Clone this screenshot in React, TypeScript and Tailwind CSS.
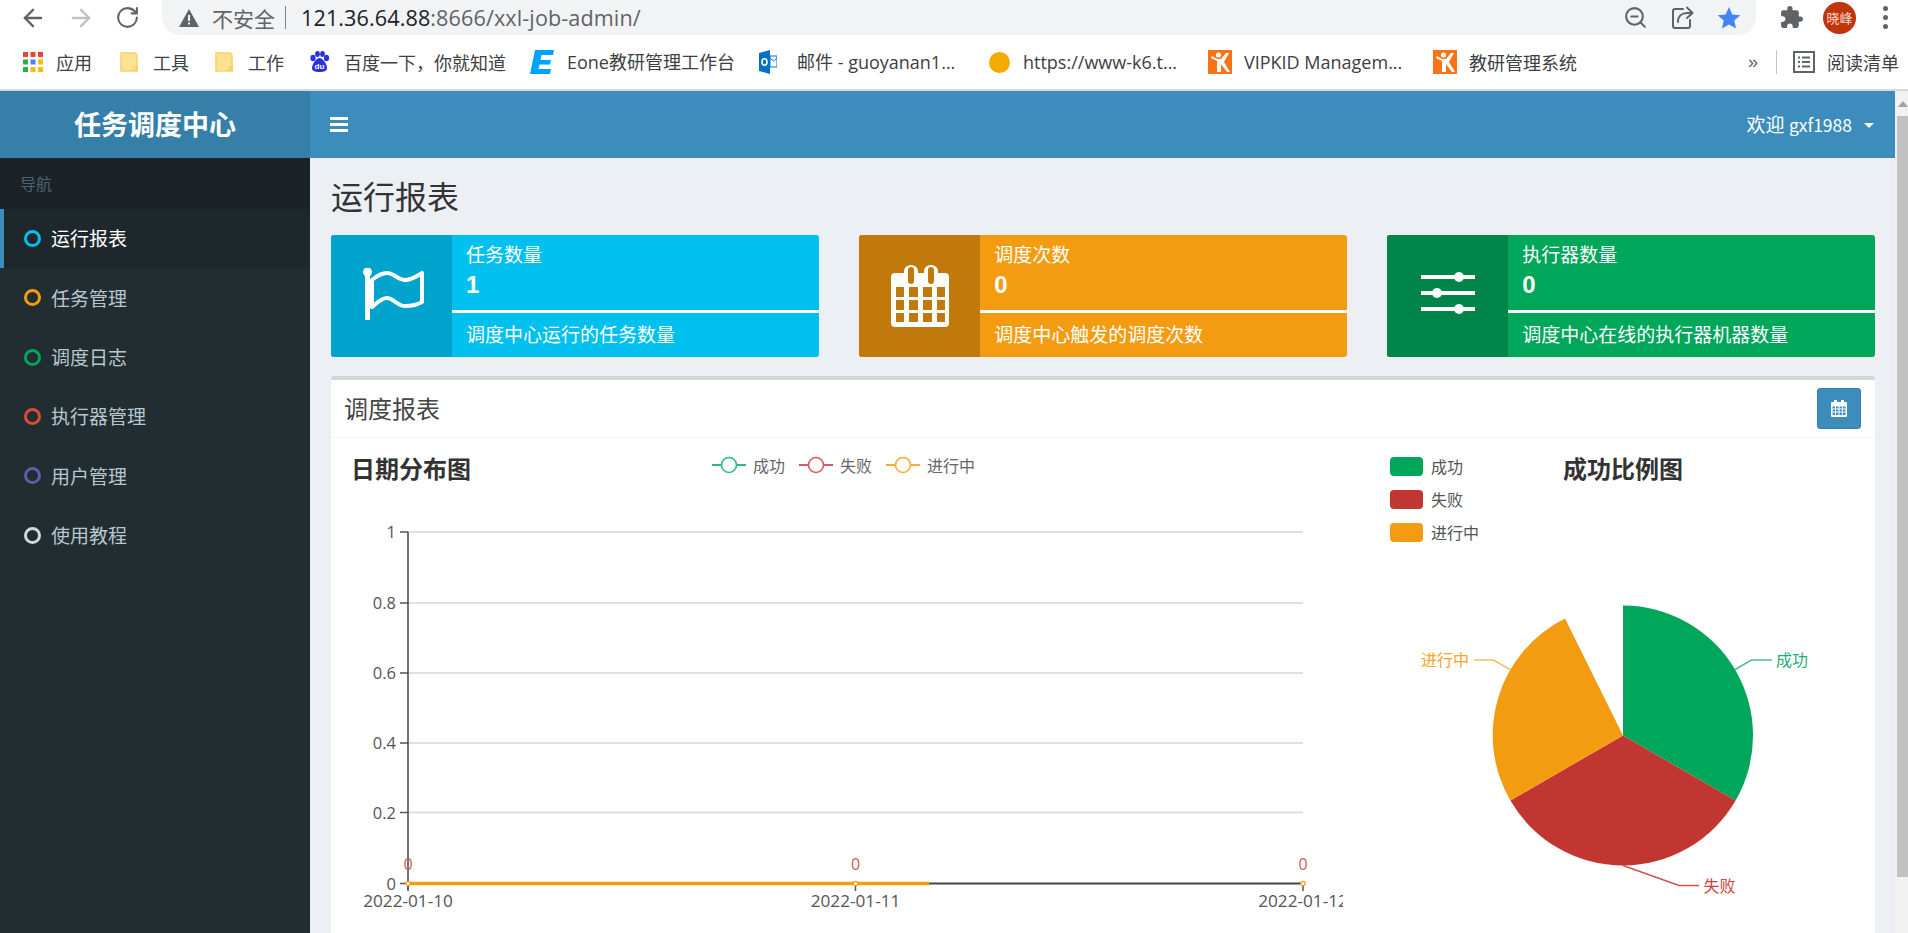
import React from "react";
import { ArrowLeft, ArrowRight, RotateCw, ZoomOut } from "lucide-react";

const Folder = ({ className }: { className: string }) => (
  <svg viewBox="0 0 18 20" className={className}>
    <path d="M1 1h13a3 3 0 0 1 3 3v15H1z" fill="#fde293" stroke="#f6d465" strokeWidth="1.6" />
    <path d="M14 19v-3a1.5 1.5 0 0 1 3 0v3" fill="none" stroke="#f2c94c" strokeWidth="1.2" />
  </svg>
);

const Vip = ({ className }: { className: string }) => (
  <svg viewBox="0 0 24 24" className={className}>
    <rect width="24" height="24" fill="#f97316" />
    <circle cx="10.5" cy="5" r="2.6" fill="#fff" />
    <path d="M3 8l6 3v11h4v-8l6 8h3l-6-10 5-9h-3l-5 6H9L4 6z" fill="#fff" />
  </svg>
);

const Ring = ({ color }: { color: string }) => (
  <span className={`block w-[17px] h-[17px] rounded-full border-[3px] ${color}`} />
);

const navItems = [
  { label: "运行报表", ring: "border-[#00c0ef]", active: true },
  { label: "任务管理", ring: "border-[#f39c12]", active: false },
  { label: "调度日志", ring: "border-[#00a65a]", active: false },
  { label: "执行器管理", ring: "border-[#dd4b39]", active: false },
  { label: "用户管理", ring: "border-[#605ca8]", active: false },
  { label: "使用教程", ring: "border-[#d2d6de]", active: false },
];

const InfoBox = ({
  bg,
  iconBg,
  icon,
  title,
  value,
  desc,
}: {
  bg: string;
  iconBg: string;
  icon: React.ReactNode;
  title: string;
  value: string;
  desc: string;
}) => (
  <div className={`flex-1 h-[122px] flex rounded-[3px] overflow-hidden text-white ${bg}`}>
    <div className={`w-[121px] shrink-0 flex items-center justify-center ${iconBg}`}>{icon}</div>
    <div className="flex-1 flex flex-col">
      <div className="h-[78px] pl-[14px] pt-[5px] border-b-[3px] border-white">
        <div className="text-[19px] leading-[28px]">{title}</div>
        <div className="text-[24px] leading-[33px] font-bold font-['Liberation_Sans',sans-serif]">{value}</div>
      </div>
      <div className="pl-[14px] text-[19px] leading-[41px]">{desc}</div>
    </div>
  </div>
);

const LineLegend = ({ stroke, label }: { stroke: string; label: string }) => (
  <div className="flex items-center">
    <svg viewBox="0 0 34 20" className="w-[34px] h-[20px]">
      <path d="M0 10h9M25 10h9" stroke={stroke} strokeWidth="2" />
      <circle cx="17" cy="10" r="7.5" fill="#fff" stroke={stroke} strokeWidth="1.6" />
    </svg>
    <span className="ml-[7px] text-[16px] leading-[20px] text-[#666]">{label}</span>
  </div>
);

const PieLegend = ({ color, label }: { color: string; label: string }) => (
  <div className="flex items-center h-[19px]">
    <span className={`w-[33px] h-[19px] rounded-[4px] ${color}`} />
    <span className="ml-[8px] text-[16px] leading-[19px] text-[#555]">{label}</span>
  </div>
);

const gridY = [532, 603, 673, 743, 812.5];
const yLabels = ["1", "0.8", "0.6", "0.4", "0.2"];
const pts = [408, 855.5, 1303];

export default function App() {
  return (
    <div className="w-[1908px] h-[933px] flex flex-col overflow-hidden bg-white font-['Noto_Sans_CJK_SC',sans-serif]">
      {/* Browser toolbar */}
      <div className="h-[35px] shrink-0 flex items-center">
        <ArrowLeft className="ml-[19px] w-[28px] h-[28px] text-[#5f6368]" strokeWidth={2} />
        <ArrowRight className="ml-[20px] w-[28px] h-[28px] text-[#bdc1c6]" strokeWidth={2} />
        <RotateCw className="ml-[20px] w-[25px] h-[25px] text-[#5f6368]" strokeWidth={2} />
        <div className="ml-[22px] w-[1594px] h-[35px] bg-[#f1f3f4] rounded-b-[18px] flex items-center">
          <svg viewBox="0 0 20 18" className="ml-[17px] w-[20px] h-[18px]">
            <path d="M10 0l10 18H0z" fill="#5f6368" />
            <rect x="9" y="6" width="2" height="6" fill="#f1f3f4" />
            <rect x="9" y="13.5" width="2" height="2" fill="#f1f3f4" />
          </svg>
          <span className="ml-[13px] text-[21px] leading-[30px] text-[#5f6368]">不安全</span>
          <span className="ml-[10px] w-[1px] h-[23px] bg-[#80868b]" />
          <span className="ml-[15px] text-[21.6px] leading-[30px] text-[#5f6368] font-['Open_Sans',sans-serif] tracking-[0.1px]">
            <span className="text-[#202124]">121.36.64.88</span>:8666/xxl-job-admin/
          </span>
          <ZoomOut className="ml-auto w-[25px] h-[25px] text-[#5f6368]" strokeWidth={2} />
          <svg viewBox="0 0 24 24" className="ml-[22px] w-[24px] h-[24px]" fill="none" stroke="#5f6368" strokeWidth="2" strokeLinecap="round" strokeLinejoin="round">
            <path d="M13 3H5a2 2 0 0 0-2 2v15a2 2 0 0 0 2 2h13a2 2 0 0 0 2-2v-6" />
            <path d="M8 16c0-6 4-9 9-9h5M17 1.5L22.500 7 17 12" />
          </svg>
          <svg viewBox="0 0 24 24" className="ml-[23px] mr-[15px] w-[24px] h-[24px]">
            <path d="M12 1l3.300 7.400 8 .8-6 5.400 1.700 7.900L12 18.400l-7 4.100 1.700-7.900-6-5.400 8-.8z" fill="#4285f4" />
          </svg>
        </div>
        <svg viewBox="0 0 24 24" className="ml-[23px] w-[25px] h-[25px]">
          <path d="M20.500 11H19V7a2 2 0 0 0-2-2h-4V3.500a2.500 2.500 0 0 0-5 0V5H4a2 2 0 0 0-2 2v3.800h1.500c1.500 0 2.700 1.200 2.700 2.700S5 16.200 3.500 16.200H2V20a2 2 0 0 0 2 2h3.800v-1.500c0-1.500 1.200-2.700 2.700-2.700s2.700 1.200 2.700 2.700V22H17a2 2 0 0 0 2-2v-4h1.500a2.500 2.500 0 0 0 0-5z" fill="#5f6368" />
        </svg>
        <div className="ml-[19px] w-[33px] h-[32px] rounded-full bg-[#bf360c] flex items-center justify-center text-[13px] leading-none text-[#ffd9cc]">
          晓峰
        </div>
        <div className="ml-[27px] flex flex-col gap-[4px]">
          <span className="block w-[5px] h-[5px] rounded-full bg-[#5f6368]" />
          <span className="block w-[5px] h-[5px] rounded-full bg-[#5f6368]" />
          <span className="block w-[5px] h-[5px] rounded-full bg-[#5f6368]" />
        </div>
      </div>

      {/* Bookmarks bar */}
      <div className="h-[56px] shrink-0 border-b-[2px] border-[#d9d9d9] flex items-center text-[18px] leading-[26px] text-[#3c4043]">
        <svg viewBox="0 0 20 20" className="ml-[23px] w-[20px] h-[20px]">
          <rect x="0" y="0" width="5" height="5" fill="#ea4335" />
          <rect x="7.500" y="0" width="5" height="5" fill="#ea4335" />
          <rect x="15" y="0" width="5" height="5" fill="#ea4335" />
          <rect x="0" y="7.500" width="5" height="5" fill="#34a853" />
          <rect x="7.500" y="7.500" width="5" height="5" fill="#4285f4" />
          <rect x="15" y="7.500" width="5" height="5" fill="#fbbc04" />
          <rect x="0" y="15" width="5" height="5" fill="#34a853" />
          <rect x="7.500" y="15" width="5" height="5" fill="#fbbc04" />
          <rect x="15" y="15" width="5" height="5" fill="#fbbc04" />
        </svg>
        <span className="ml-[13px]">应用</span>
        <Folder className="ml-[28px] w-[18px] h-[20px]" />
        <span className="ml-[15px]">工具</span>
        <Folder className="ml-[26px] w-[18px] h-[20px]" />
        <span className="ml-[15px]">工作</span>
        <svg viewBox="0 0 21 22" className="ml-[25px] w-[21px] h-[22px]">
          <ellipse cx="4" cy="7" rx="2.600" ry="3.200" fill="#2932e1" />
          <ellipse cx="8.500" cy="3" rx="2.400" ry="3" fill="#2932e1" />
          <ellipse cx="13.500" cy="3" rx="2.400" ry="3" fill="#2932e1" />
          <ellipse cx="17.500" cy="7" rx="2.600" ry="3.200" fill="#2932e1" />
          <path d="M10.500 7c3 0 7.500 6 7.500 10 0 3-3 4-7.500 4S3 20 3 17c0-4 4.500-10 7.500-10z" fill="#2932e1" />
          <text x="10.500" y="18" textAnchor="middle" fontSize="8" fontWeight="700" fill="#fff" fontFamily="Liberation Sans">du</text>
        </svg>
        <span className="ml-[14px] w-[163px] whitespace-nowrap">百度一下，你就知道</span>
        <svg viewBox="0 0 24 24" className="ml-[23px] w-[24px] h-[24px]">
          <path d="M5 0h19l-1 5H11.500l-1 5H21l-1 4.500H9.500L8.500 19H21l-1 5H0z" fill="#00a2ff" />
        </svg>
        <span className="ml-[13px] font-['Open_Sans','Noto_Sans_CJK_SC',sans-serif] whitespace-nowrap">Eone教研管理工作台</span>
        <svg viewBox="0 0 18 24" className="ml-[24px] w-[18px] h-[24px]">
          <path d="M0 3l11-3v24L0 21z" fill="#0072c6" />
          <rect x="11" y="6" width="7" height="11" fill="#fff" stroke="#0072c6" strokeWidth="1" />
          <path d="M11 8l3.500 3L18 8" fill="none" stroke="#0072c6" strokeWidth="1" />
          <ellipse cx="5.500" cy="12" rx="2.500" ry="3.200" fill="none" stroke="#fff" strokeWidth="1.600" />
        </svg>
        <span className="ml-[20px] w-[166px] whitespace-nowrap overflow-hidden font-['Open_Sans','Noto_Sans_CJK_SC',sans-serif]">邮件 - guoyanan1...</span>
        <span className="ml-[26px] w-[21px] h-[21px] rounded-full bg-[#f4ab00]" />
        <span className="ml-[13px] w-[161px] whitespace-nowrap overflow-hidden font-['Open_Sans',sans-serif]">https://www-k6.t...</span>
        <Vip className="ml-[24px] w-[24px] h-[24px]" />
        <span className="ml-[12px] w-[166px] whitespace-nowrap overflow-hidden font-['Open_Sans',sans-serif]">VIPKID Managem...</span>
        <Vip className="ml-[23px] w-[24px] h-[24px]" />
        <span className="ml-[12px] whitespace-nowrap">教研管理系统</span>
        <span className="ml-[171px] text-[18px] text-[#5f6368] font-['Liberation_Sans',sans-serif]">»</span>
        <span className="ml-[18px] w-[1px] h-[24px] bg-[#c8c8c8]" />
        <svg viewBox="0 0 22 22" className="ml-[16px] w-[22px] h-[22px]" fill="none" stroke="#5f6368" strokeWidth="2">
          <rect x="1" y="1" width="20" height="20" />
          <path d="M5 6.500h2M9 6.500h8M5 11h2M9 11h8M5 15.500h2M9 15.500h8" />
        </svg>
        <span className="ml-[12px] whitespace-nowrap">阅读清单</span>
      </div>

      {/* Page */}
      <div className="flex-1 flex min-h-0">
        <aside className="w-[310px] shrink-0 bg-[#222d32] flex flex-col">
          <div className="h-[67px] shrink-0 bg-[#367fa9] flex items-center justify-center text-white text-[27px] font-bold">
            任务调度中心
          </div>
          <div className="h-[51px] shrink-0 bg-[#1a2226] pl-[20px] pb-[2px] flex items-center text-[16px] text-[#4b646f]">导航</div>
          {navItems.map((n) => (
            <div
              key={n.label}
              className={`h-[59.3px] shrink-0 flex items-center border-l-[4px] pl-[20px] text-[19px] ${
                n.active ? "bg-[#1e282c] border-[#3c8dbc] text-white" : "border-transparent text-[#b8c7ce]"
              }`}
            >
              <Ring color={n.ring} />
              <span className="ml-[10px]">{n.label}</span>
            </div>
          ))}
        </aside>

        <div className="flex-1 min-w-0 flex flex-col bg-[#ecf0f5]">
          <header className="h-[67px] shrink-0 bg-[#3c8dbc] flex items-center text-white">
            <div className="ml-[20px] w-[18px] flex flex-col gap-[3px]">
              <span className="block h-[3px] bg-white" />
              <span className="block h-[3px] bg-white" />
              <span className="block h-[3px] bg-white" />
            </div>
            <span className="ml-auto text-[19px]">
              欢迎 <span className="text-[17.5px]">gxf1988</span>
            </span>
            <span className="ml-[12px] mr-[21px] mt-[2px] w-0 h-0 border-x-[5px] border-x-transparent border-t-[5px] border-t-white" />
          </header>

          <div className="flex-1 min-h-0 pl-[21px] pr-[20px] flex flex-col">
            <h1 className="h-[77px] shrink-0 flex items-center text-[32px] leading-none text-[#333] pb-[4px]">运行报表</h1>
            <div className="flex gap-[40.5px] shrink-0">
              <InfoBox
                bg="bg-[#00c0ef]"
                iconBg="bg-[#00a3cb]"
                title="任务数量"
                value="1"
                desc="调度中心运行的任务数量"
                icon={
                  <svg viewBox="363 268 62 54" className="ml-[5px] mb-[2px] w-[62px] h-[54px]">
                    <circle cx="367.500" cy="272" r="4.500" fill="#fff" />
                    <rect x="365" y="272" width="5" height="48" rx="1" fill="#fff" />
                    <path d="M372 280C378 275 382 273 387 273C394 273 398 280 405 280C412 280 417 276 422 273V302C417 305 411 306 405 306C398 306 393 298 387 298C381 298 376 304 372 307Z" fill="none" stroke="#fff" strokeWidth="4" strokeLinejoin="round" />
                  </svg>
                }
              />
              <InfoBox
                bg="bg-[#f39c12]"
                iconBg="bg-[#c1790c]"
                title="调度次数"
                value="0"
                desc="调度中心触发的调度次数"
                icon={
                  <svg viewBox="0 0 58 62" className="mb-[1px] w-[58px] h-[62px]">
                    <path fillRule="evenodd" fill="#fff" d="M4 8h9V6a7 6 0 0 1 14 0v2h6V6a7 6 0 0 1 14 0v2h7a4 4 0 0 1 4 4v46a4 4 0 0 1-4 4H4a4 4 0 0 1-4-4V12a4 4 0 0 1 4-4zM17 5v11a3 3 0 0 0 6 0V5a3 3 0 0 0-6 0zM37 5v11a3 3 0 0 0 6 0V5a3 3 0 0 0-6 0zM5 22v10h8V22zM18 22v10h9V22zM32 22v10h9V22zM46 22v10h8V22zM5 35v10h8V35zM18 35v10h9V35zM32 35v10h9V35zM46 35v10h8V35zM5 48v9h8v-9zM18 48v9h9v-9zM32 48v9h9v-9zM46 48v9h8v-9z" />
                  </svg>
                }
              />
              <InfoBox
                bg="bg-[#00a65a]"
                iconBg="bg-[#008548]"
                title="执行器数量"
                value="0"
                desc="调度中心在线的执行器机器数量"
                icon={
                  <svg viewBox="0 0 54 44" className="mb-[6px] w-[54px] h-[44px]">
                    <rect x="0" y="4" width="54" height="4" fill="#fff" />
                    <rect x="0" y="20" width="54" height="4" fill="#fff" />
                    <rect x="0" y="36" width="54" height="4" fill="#fff" />
                    <circle cx="38" cy="6" r="5" fill="#fff" />
                    <circle cx="16" cy="22" r="5" fill="#fff" />
                    <circle cx="38" cy="38" r="5" fill="#fff" />
                  </svg>
                }
              />
            </div>

            <section className="mt-[19px] flex-1 min-h-0 bg-white border-t-[4px] border-[#d2d6de] rounded-t-[3px] flex flex-col overflow-hidden">
              <div className="h-[58px] shrink-0 border-b border-[#f4f4f4] flex items-center pl-[13px] pr-[14px]">
                <span className="text-[24px] text-[#444] mb-[2px]">调度报表</span>
                <button className="ml-auto mb-[1px] w-[44px] h-[41px] rounded-[3px] bg-[#3c8dbc] border border-[#367fa9] flex items-center justify-center">
                  <svg viewBox="0 0 16 17" className="w-[16px] h-[17px]">
                    <path fillRule="evenodd" fill="#fff" d="M1 2h2V1a1 1 0 0 1 3 0v1h4V1a1 1 0 0 1 3 0v1h2a1 1 0 0 1 1 1v13a1 1 0 0 1-1 1H1a1 1 0 0 1-1-1V3a1 1 0 0 1 1-1zM1.500 6.500v2h2.500v-2zM5 6.500v2h2.500v-2zM8.500 6.500v2H11v-2zM12 6.500v2h2.500v-2zM1.500 9.500v2h2.500v-2zM5 9.500v2h2.500v-2zM8.500 9.500v2H11v-2zM12 9.500v2h2.500v-2zM1.500 12.500v2.500h2.500v-2.500zM5 12.500v2.500h2.500v-2.500zM8.500 12.500v2.500H11v-2.500zM12 12.500v2.500h2.500v-2.500z" />
                  </svg>
                </button>
              </div>

              <div className="flex-1 min-h-0 flex">
                {/* Line chart */}
                <div className="w-[1012px] shrink-0 flex flex-col overflow-hidden">
                  <div className="h-[72px] shrink-0 flex items-start pl-[20px] pt-[12px]">
                    <span className="w-[361px] shrink-0 text-[24px] leading-[36px] font-bold text-[#333]">日期分布图</span>
                    <div className="flex gap-[14px] pt-[5px]">
                      <LineLegend stroke="#2fbb7e" label="成功" />
                      <LineLegend stroke="#d9595a" label="失败" />
                      <LineLegend stroke="#f9ac33" label="进行中" />
                    </div>
                  </div>
                  <svg viewBox="331 510 1012 423" className="w-[1012px] h-[423px] shrink-0">
                    {gridY.map((y, i) => (
                      <g key={y}>
                        <path d={`M408 ${y}H1303`} stroke="#e0e0e0" strokeWidth="2" />
                        <path d={`M400 ${y}H408`} stroke="#555" strokeWidth="1.500" />
                        <text x="396" y={y + 6} textAnchor="end" fontSize="16.500" fill="#555" fontFamily="Open Sans, Noto Sans">{yLabels[i]}</text>
                      </g>
                    ))}
                    <path d="M400 883.500H408" stroke="#555" strokeWidth="1.500" />
                    <text x="396" y="889.500" textAnchor="end" fontSize="16.500" fill="#555" fontFamily="Open Sans, Noto Sans">0</text>
                    <path d="M408 532V890" stroke="#444" strokeWidth="1.500" />
                    <path d="M408 883.500H1303" stroke="#444" strokeWidth="2" />
                    {pts.map((x) => (
                      <path key={x} d={`M${x} 883V891`} stroke="#555" strokeWidth="1.500" />
                    ))}
                    <path d="M408 883.500H929" stroke="#f39c12" strokeWidth="3.500" />
                    {pts.map((x) => (
                      <g key={`p${x}`}>
                        <circle cx={x} cy="883.500" r="2.200" fill="#fff" stroke="#f39c12" strokeWidth="1.200" />
                        <text x={x} y="870" textAnchor="middle" fontSize="16" fill="#d9595a" fontFamily="Open Sans, Noto Sans">0</text>
                      </g>
                    ))}
                    {["2022-01-10", "2022-01-11", "2022-01-12"].map((d, i) => (
                      <text key={d} x={pts[i]} y="907" textAnchor="middle" fontSize="17.200" fill="#555" fontFamily="Open Sans, Noto Sans">{d}</text>
                    ))}
                  </svg>
                </div>

                {/* Pie chart */}
                <div className="flex-1 min-w-0 flex flex-col overflow-hidden">
                  <div className="h-[112px] shrink-0 flex items-start">
                    <div className="ml-[47px] w-[173px] shrink-0 pt-[19px] flex flex-col gap-[14px]">
                      <PieLegend color="bg-[#00a65a]" label="成功" />
                      <PieLegend color="bg-[#c23632]" label="失败" />
                      <PieLegend color="bg-[#f39c12]" label="进行中" />
                    </div>
                    <span className="pt-[12px] text-[24px] leading-[36px] font-bold text-[#333] whitespace-nowrap">成功比例图</span>
                  </div>
                  <svg viewBox="1343 549.500 532 383" className="w-[532px] h-[383px] shrink-0">
                    <path d="M1623 735V605A130 130 0 0 1 1735.600 800Z" fill="#00a65a" />
                    <path d="M1623 735L1735.600 800A130 130 0 0 1 1510.400 800Z" fill="#c23632" />
                    <path d="M1623 735L1510.400 800A130 130 0 0 1 1565 618Z" fill="#f39c12" />
                    <path d="M1735 669L1751.500 659.500H1772" fill="none" stroke="#4cc097" strokeWidth="1.500" />
                    <path d="M1510 669L1493.500 659.500H1474" fill="none" stroke="#f9bd60" strokeWidth="1.500" />
                    <path d="M1623 865L1679 885H1699" fill="none" stroke="#d2504e" strokeWidth="1.500" />
                    <text x="1776" y="665" fontSize="16" fill="#1fae73">成功</text>
                    <text x="1421" y="665" fontSize="16" fill="#f5a623">进行中</text>
                    <text x="1703.500" y="891" fontSize="16" fill="#d0413e">失败</text>
                  </svg>
                </div>
              </div>
            </section>
          </div>
        </div>

        {/* Scrollbar */}
        <div className="w-[13px] shrink-0 bg-[#f1f1f1] flex flex-col items-end">
          <div className="w-[11px] h-[25px] flex items-center justify-center">
            <span className="w-0 h-0 border-x-[5px] border-x-transparent border-b-[6px] border-b-[#a3a3a3]" />
          </div>
          <div className="w-[11px] h-[761px] bg-[#c1c1c1]" />
        </div>
      </div>
    </div>
  );
}
